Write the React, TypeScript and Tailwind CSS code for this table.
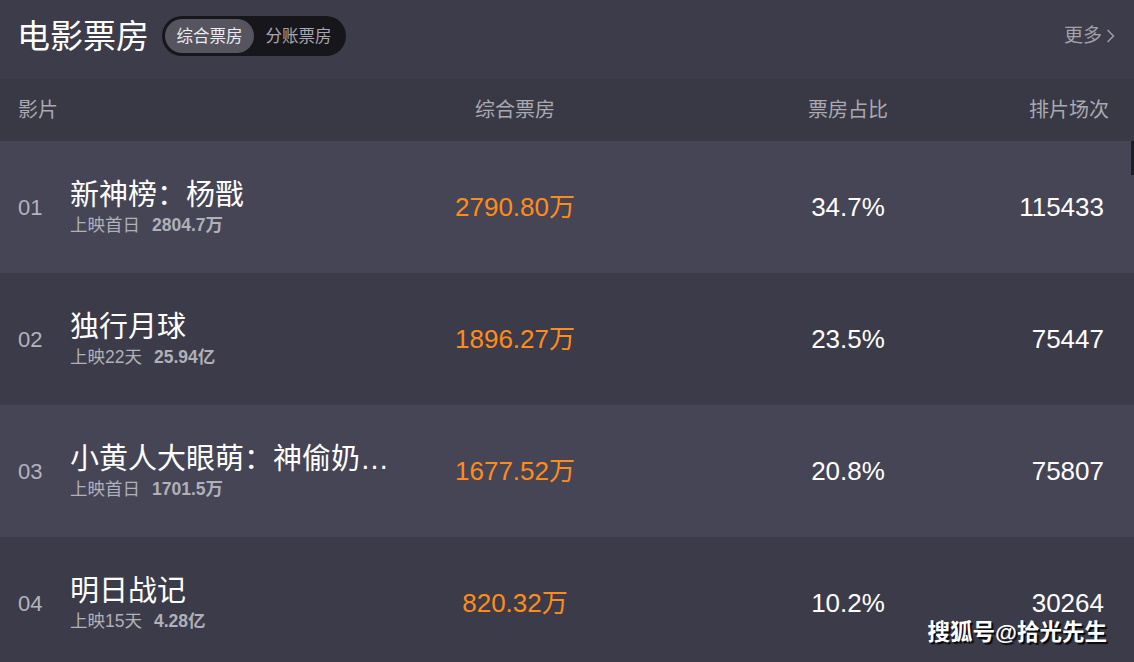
import React from "react";

const films = [
  { rank: "01", name: "新神榜：杨戬", tag: "上映首日", total: "2804.7万", box: "2790.80万", share: "34.7%", shows: "115433" },
  { rank: "02", name: "独行月球", tag: "上映22天", total: "25.94亿", box: "1896.27万", share: "23.5%", shows: "75447" },
  { rank: "03", name: "小黄人大眼萌：神偷奶…", tag: "上映首日", total: "1701.5万", box: "1677.52万", share: "20.8%", shows: "75807" },
  { rank: "04", name: "明日战记", tag: "上映15天", total: "4.28亿", box: "820.32万", share: "10.2%", shows: "30264" },
];

const font = { fontFamily: '"Liberation Sans", "Noto Sans CJK SC", sans-serif' };

const App = () => {
  return (
    <div className="relative w-[1134px] h-[662px] overflow-hidden bg-[#3d3c4a] text-white" style={font}>
      {/* 标题栏 */}
      <div className="h-[79px] pb-[7px] pl-[17px] pr-[18px] flex items-center">
        <h1 className="text-[33px] leading-none font-normal">电影票房</h1>
        <div className="ml-[13px] h-[40px] w-[184px] rounded-full bg-[#17161b] p-[3px] flex items-center">
          <span className="h-full w-[89px] rounded-full bg-[#56545f] flex items-center justify-center text-[16.5px] text-[#ececf0]">
            综合票房
          </span>
          <span className="flex-1 text-center text-[16.5px] text-[#a8a8b0]">分账票房</span>
        </div>
        <div className="ml-auto mr-[1px] flex items-center text-[19px] text-[#a2a2ab] gap-[4px]">
          <span>更多</span>
          <svg width="9" height="16" viewBox="0 0 9 16" fill="none" stroke="currentColor" strokeWidth="1.4">
            <path d="M1.5 2l6 6-6 6" />
          </svg>
        </div>
      </div>

      {/* 表头 */}
      <div className="h-[62px] bg-[#393845] flex items-center pl-[18px] text-[20px] text-[#a9a9b2]">
        <div className="w-[382px]">影片</div>
        <div className="w-[230px] text-center">综合票房</div>
        <div className="w-[176px] ml-[130px] text-center">票房占比</div>
        <div className="w-[173px] text-right">排片场次</div>
      </div>

      {/* 列表 */}
      {films.map((f, i) => (
        <div
          key={f.rank}
          className={`h-[132px] flex items-center pl-[18px] ${i % 2 === 0 ? "bg-[#464556]" : "bg-[#3c3b49]"}`}
        >
          <div className="w-[382px] flex items-center">
            <span className="w-[52px] text-[22px] text-[#b4b4bc]">{f.rank}</span>
            <div className="flex flex-col min-w-0">
              <span className="text-[29px] leading-[34px] whitespace-nowrap">{f.name}</span>
              <span className="text-[17.5px] leading-[24px] text-[#b0b0b8] mt-[1px] whitespace-nowrap">
                {f.tag}
                <span className="ml-[12px] font-semibold">{f.total}</span>
              </span>
            </div>
          </div>
          <div className="w-[230px] text-center text-[26px] text-[#ff8c1a]">{f.box}</div>
          <div className="w-[176px] ml-[130px] text-center text-[26px]">{f.share}</div>
          <div className="w-[173px] text-right pr-[5px] text-[26px]">{f.shows}</div>
        </div>
      ))}

      {/* 滚动条 */}
      <div className="absolute right-0 top-[141px] w-[3px] h-[34px] bg-[#1f1e25]" />

      {/* 水印 */}
      <div className="absolute right-[27px] bottom-[12px] text-[22.5px] font-bold text-white [text-shadow:2px_2px_1px_rgba(0,0,0,0.85)]">
        搜狐号@拾光先生
      </div>
    </div>
  );
};

export default App;
